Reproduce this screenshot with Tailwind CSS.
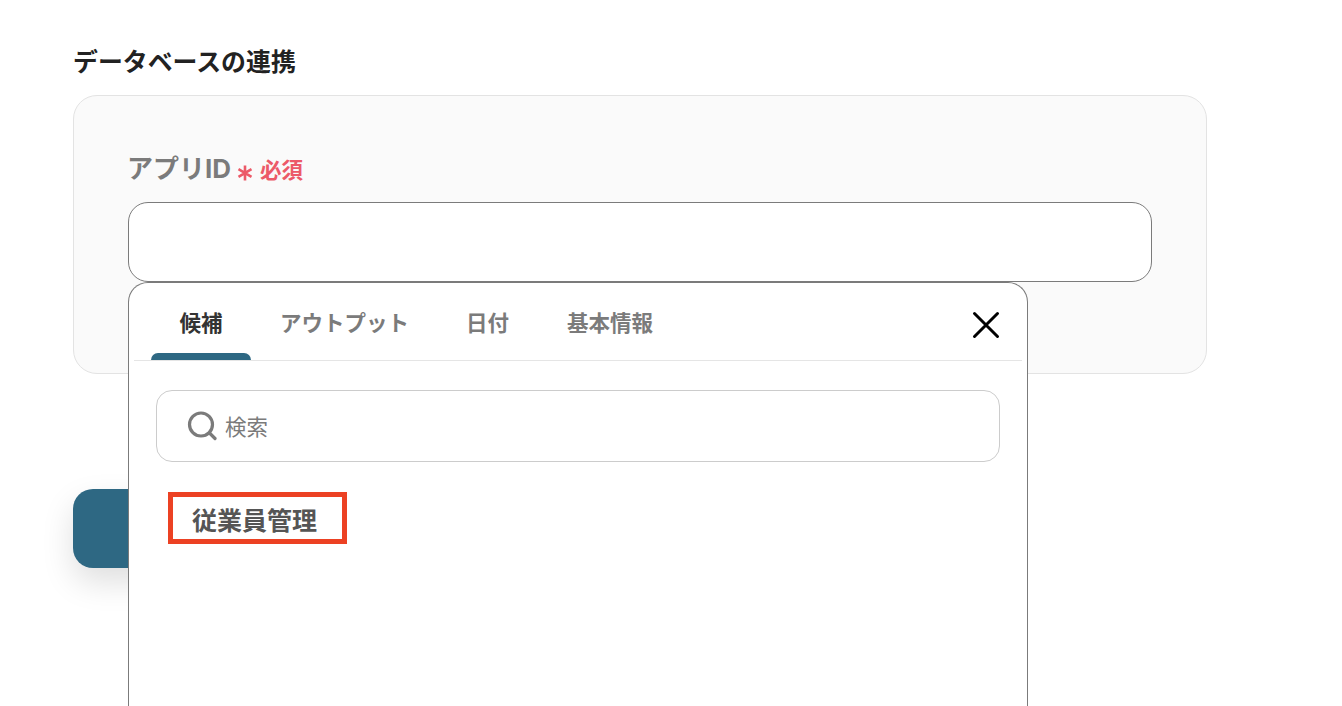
<!DOCTYPE html>
<html lang="ja">
<head>
  <meta charset="UTF-8" />
  <title>データベースの連携</title>
  <script src="https://cdn.jsdelivr.net/npm/@tailwindcss/browser@4"></script>
</head>
<body class="h-[706px] overflow-hidden bg-white font-['Inter','Noto_Sans_CJK_JP',sans-serif]">
  <main class="pl-[73px] pt-[44px] w-[1207px]">
    <h2 class="h-[34px] pt-px text-[24.9px] leading-[34px] font-bold text-[#222222]">データベースの連携</h2>

    <!-- Card -->
    <section class="mt-[17px] h-[279px] rounded-[24px] border border-[#e3e3e3] bg-[#fafafa] pl-[54px] pr-[54px] pt-[55px]">
      <div class="flex items-center h-[36px]">
        <span class="-ml-px text-[26px] leading-[36px] font-bold text-[#7b7b7b]">アプリID</span>
        <svg class="ml-[6px] mt-[7px]" width="16" height="16" viewBox="0 0 16 16" fill="none" stroke="#ec5a68" stroke-width="2.6">
          <path d="M8 0.5V15.5M1.5 4.2L14.5 11.8M14.5 4.2L1.5 11.8" />
        </svg>
        <span class="ml-[7px] mt-[2px] text-[21.5px] leading-[30px] font-bold text-[#ec5a68]">必須</span>
      </div>

      <div class="relative mt-[15px]">
        <div class="h-[80px] rounded-[20px] border border-[#7b7b7b] bg-white"></div>

        <!-- Dropdown -->
        <div class="absolute left-0 top-[80px] z-10 w-[900px] h-[424px] rounded-t-[20px] border border-b-0 border-[#7b7b7b] bg-white">
          <div class="relative mx-[5px] flex h-[78px] border-b border-[#e5e5e5] text-[21.5px] font-bold">
            <div class="relative w-[100px] ml-[17px] pt-[24px] text-center leading-[33px] text-[#333333]">
              候補
              <span class="absolute bottom-0 left-0 h-[7px] w-[100px] rounded-t-[8px] bg-[#2e6883]"></span>
            </div>
            <div class="ml-[29px] pt-[24px] leading-[33px] text-[#7b7b7b]">アウトプット</div>
            <div class="ml-[57px] pt-[24px] leading-[33px] text-[#7b7b7b]">日付</div>
            <div class="ml-[58px] pt-[24px] leading-[33px] text-[#7b7b7b]">基本情報</div>
            <svg class="absolute left-[838px] top-[28px]" width="28" height="28" viewBox="0 0 28 28" fill="none" stroke="#000000" stroke-width="3" stroke-linecap="round">
              <path d="M2.5 2.5L25.5 25.5M25.5 2.5L2.5 25.5" />
            </svg>
          </div>

          <div class="mx-[27px] mt-[29px] flex h-[72px] items-center rounded-[16px] border border-[#cccccc] pl-[30px]">
            <svg width="30" height="30" viewBox="0 0 30 30" fill="none" stroke="#7b7b7b" stroke-width="3.2" stroke-linecap="round">
              <circle cx="14" cy="13.5" r="11.5" />
              <path d="M22.5 22L28 27.5" />
            </svg>
            <span class="ml-[8px] pt-[2px] text-[21.5px] text-[#7b7b7b]">検索</span>
          </div>

          <div class="ml-[39px] mt-[30px] flex h-[52px] w-[179px] items-center border-[5px] border-[#ec4123] pl-[19px] pt-[8px] text-[25px] font-bold text-[#555555]">従業員管理</div>
        </div>
      </div>
    </section>

    <!-- Button behind the dropdown -->
    <div class="mt-[115px] h-[79px] w-[300px] rounded-[20px] bg-[#2e6883] shadow-[0_14px_32px_rgba(0,0,0,0.13)]"></div>
  </main>
</body>
</html>
